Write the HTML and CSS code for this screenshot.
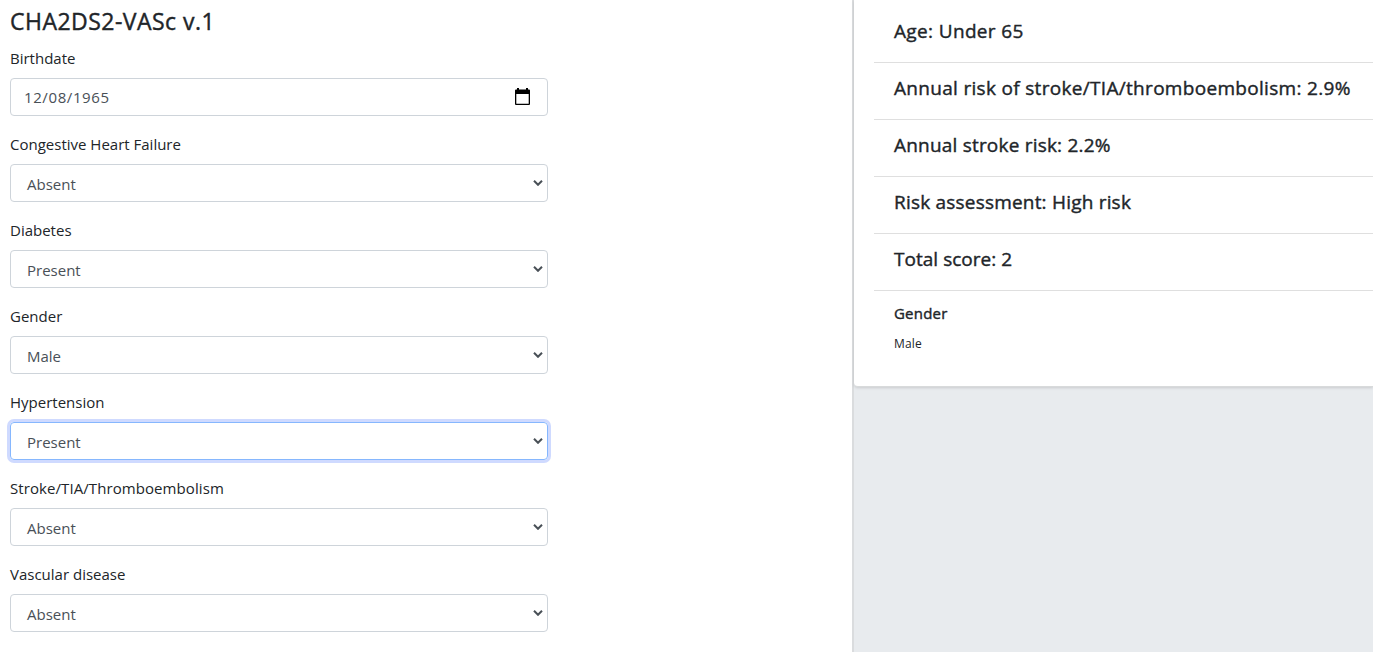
FILE: index.html
```html
<!DOCTYPE html>
<html lang="en">
<head>
<meta charset="utf-8">
<title>CHA2DS2-VASc v.1</title>
<link rel="stylesheet" href="styles.css">
</head>
<body>
<main class="page">
  <form class="form">
    <h1 class="title">CHA2DS2-VASc v.1</h1>
    <div class="group"><label class="label">Birthdate</label><div class="control date"><span>12/08/1965</span><svg class="calendar" viewBox="0 0 15 17"><path fill="#000" fill-rule="evenodd" d="M2 0h2v1.500h7V0h2v1.500h1q1 0 1 1V16q0 1-1 1H1q-1 0-1-1V2.500q0-1 1-1h1zM1.300 6v9.700h12.400V6z"/></svg></div></div>
    <div class="group"><label class="label">Congestive Heart Failure</label><div class="control"><span>Absent</span><svg class="chevron" viewBox="0 0 10 6"><path d="M1 .8l4 4 4-4"/></svg></div></div>
    <div class="group"><label class="label">Diabetes</label><div class="control"><span>Present</span><svg class="chevron" viewBox="0 0 10 6"><path d="M1 .8l4 4 4-4"/></svg></div></div>
    <div class="group"><label class="label">Gender</label><div class="control"><span>Male</span><svg class="chevron" viewBox="0 0 10 6"><path d="M1 .8l4 4 4-4"/></svg></div></div>
    <div class="group"><label class="label">Hypertension</label><div class="control focused"><span>Present</span><svg class="chevron" viewBox="0 0 10 6"><path d="M1 .8l4 4 4-4"/></svg></div></div>
    <div class="group"><label class="label wide">Stroke/TIA/Thromboembolism</label><div class="control"><span>Absent</span><svg class="chevron" viewBox="0 0 10 6"><path d="M1 .8l4 4 4-4"/></svg></div></div>
    <div class="group"><label class="label">Vascular disease</label><div class="control"><span>Absent</span><svg class="chevron" viewBox="0 0 10 6"><path d="M1 .8l4 4 4-4"/></svg></div></div>
  </form>
  <aside class="side">
    <div class="card">
      <div class="result">Age: Under 65</div>
      <div class="result">Annual risk of stroke/TIA/thromboembolism: 2.9%</div>
      <div class="result">Annual stroke risk: 2.2%</div>
      <div class="result">Risk assessment: High risk</div>
      <div class="result">Total score: 2</div>
      <div class="detail"><div class="name">Gender</div><div class="value">Male</div></div>
    </div>
  </aside>
</main>
</body>
</html>
```
FILE: styles.css
```css
* { box-sizing: border-box; }
body { margin: 0; background: #fff; color: #212529; font-family: "Segoe UI", "Open Sans", sans-serif; overflow: hidden; }
.page { display: flex; justify-content: space-between; height: 652px; overflow: hidden; }
.form { width: 538px; margin-left: 10px; padding-top: 7px; }
.title { margin: 0 0 8px; font-size: 23px; line-height: 29px; font-weight: 500; letter-spacing: .47px; }
.title, .result, .name { -webkit-text-stroke: .4px #212529; }
.group { height: 86px; padding-top: 2px; }
.label { display: block; height: 24px; margin-bottom: 8px; font-size: 15px; line-height: 24px; }
.wide { letter-spacing: .08px; }
.control { display: flex; align-items: center; justify-content: space-between; height: 38px; padding: 2px 4px 0 16px; border: 1px solid #ced4da; border-radius: 4px; color: #495057; font-size: 15px; }
.date { padding: 0 17px 0 13px; letter-spacing: .6px; }
.calendar { width: 15px; height: 17px; margin-bottom: 1px; }
.chevron { width: 10px; height: 6px; margin-bottom: 2px; fill: none; stroke: #495057; stroke-width: 2; }
.focused { border-color: #86b7fe; box-shadow: 0 0 0 3px #cfdaff; }
.side { width: 521px; background: #e8ebee; border-left: 2px solid #dadcde; }
.card { height: 387px; padding-left: 20px; background: #fff; border-bottom: 1px solid #d8dadb; border-bottom-left-radius: 4px; box-shadow: 0 1px 3px #0002; }
.result { height: 57px; padding: 0 0 0 20px; border-bottom: 1px solid #dfdfdf; font-size: 19px; font-weight: 500; letter-spacing: .2px; line-height: 50px; white-space: nowrap; }
.result:first-child { height: 63px; line-height: 62px; letter-spacing: .35px; }
.result:nth-child(2) { letter-spacing: .31px; }
.result:nth-child(5) { letter-spacing: .03px; }
.detail { padding: 11px 20px; }
.name { font-size: 15px; line-height: 22px; font-weight: 500; letter-spacing: .2px; }
.value { margin-top: 11px; font-size: 12px; line-height: 18px; letter-spacing: .2px; }
```
